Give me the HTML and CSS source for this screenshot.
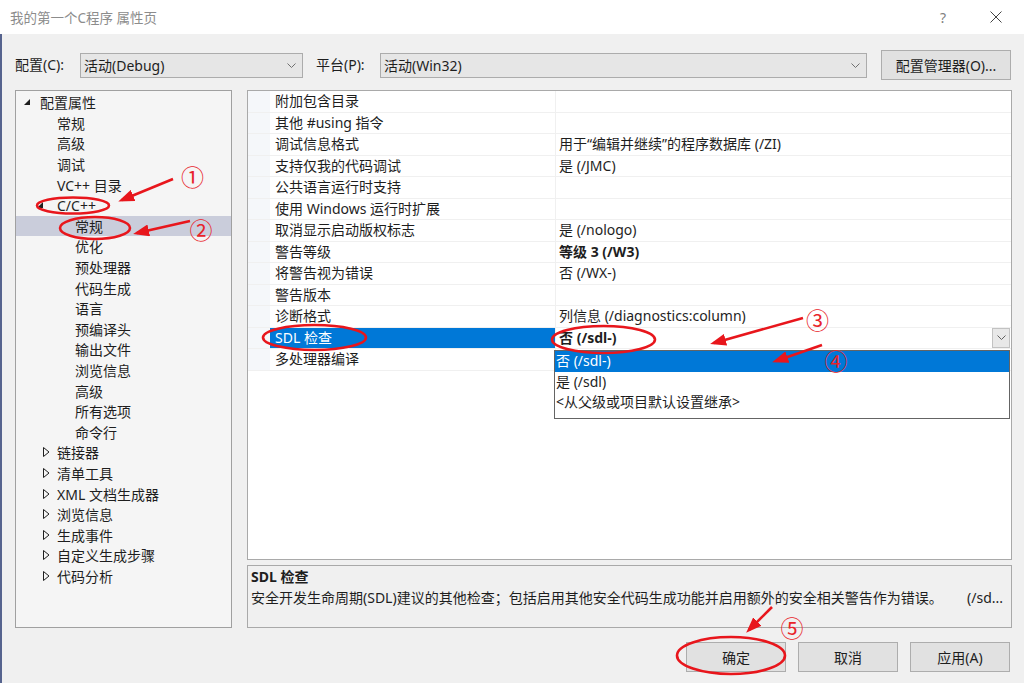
FILE: index.html
```html
<!DOCTYPE html>
<html lang="zh-CN">
<head>
    <meta charset="UTF-8">
    <title>我的第一个C程序 属性页</title>
    <link rel="stylesheet" href="styles.css">
</head>
<body>
    <div class="titlebar">
        <span class="title">我的第一个C程序 属性页</span>
        <span class="help">?</span>
        <span class="close">
            <svg width="12" height="12" viewBox="0 0 12 12"><path d="M0.5 0.5 L11.5 11.5 M11.5 0.5 L0.5 11.5" stroke="#444" stroke-width="1" fill="none"/></svg>
        </span>
    </div>
    <div class="main">
        <div class="toolbar">
            <span class="tb-label">配置(C):</span>
            <div class="combo combo-config">
                <span>活动(Debug)</span>
                <svg class="chev" width="9" height="5" viewBox="0 0 9 5"><polyline points="0.5,0.5 4.5,4.5 8.5,0.5" stroke="#707070" fill="none"/></svg>
            </div>
            <span class="tb-label tb-platform">平台(P):</span>
            <div class="combo combo-platform">
                <span>活动(Win32)</span>
                <svg class="chev" width="9" height="5" viewBox="0 0 9 5"><polyline points="0.5,0.5 4.5,4.5 8.5,0.5" stroke="#707070" fill="none"/></svg>
            </div>
            <button class="btn btn-manager">配置管理器(O)...</button>
        </div>

        <div class="content">
            <div class="tree">
                <div class="node root"><span class="twist"><svg width="6" height="6" viewBox="0 0 6 6"><polygon points="6,0 6,6 0,6" fill="#1e1e1e"/></svg></span>配置属性</div>
                <div class="node l1">常规</div>
                <div class="node l1">高级</div>
                <div class="node l1">调试</div>
                <div class="node l1">VC++ 目录</div>
                <div class="node l1-open"><span class="twist"><svg width="6" height="6" viewBox="0 0 6 6"><polygon points="6,0 6,6 0,6" fill="#1e1e1e"/></svg></span>C/C++</div>
                <div class="node l2 selected">常规</div>
                <div class="node l2">优化</div>
                <div class="node l2">预处理器</div>
                <div class="node l2">代码生成</div>
                <div class="node l2">语言</div>
                <div class="node l2">预编译头</div>
                <div class="node l2">输出文件</div>
                <div class="node l2">浏览信息</div>
                <div class="node l2">高级</div>
                <div class="node l2">所有选项</div>
                <div class="node l2">命令行</div>
                <div class="node l1-closed"><span class="twist"><svg width="7" height="10" viewBox="0 0 7 10"><polygon points="0.5,0.5 6,5 0.5,9.5" fill="none" stroke="#1e1e1e"/></svg></span>链接器</div>
                <div class="node l1-closed"><span class="twist"><svg width="7" height="10" viewBox="0 0 7 10"><polygon points="0.5,0.5 6,5 0.5,9.5" fill="none" stroke="#1e1e1e"/></svg></span>清单工具</div>
                <div class="node l1-closed"><span class="twist"><svg width="7" height="10" viewBox="0 0 7 10"><polygon points="0.5,0.5 6,5 0.5,9.5" fill="none" stroke="#1e1e1e"/></svg></span>XML 文档生成器</div>
                <div class="node l1-closed"><span class="twist"><svg width="7" height="10" viewBox="0 0 7 10"><polygon points="0.5,0.5 6,5 0.5,9.5" fill="none" stroke="#1e1e1e"/></svg></span>浏览信息</div>
                <div class="node l1-closed"><span class="twist"><svg width="7" height="10" viewBox="0 0 7 10"><polygon points="0.5,0.5 6,5 0.5,9.5" fill="none" stroke="#1e1e1e"/></svg></span>生成事件</div>
                <div class="node l1-closed"><span class="twist"><svg width="7" height="10" viewBox="0 0 7 10"><polygon points="0.5,0.5 6,5 0.5,9.5" fill="none" stroke="#1e1e1e"/></svg></span>自定义生成步骤</div>
                <div class="node l1-closed"><span class="twist"><svg width="7" height="10" viewBox="0 0 7 10"><polygon points="0.5,0.5 6,5 0.5,9.5" fill="none" stroke="#1e1e1e"/></svg></span>代码分析</div>
            </div>

            <div class="right">
                <div class="grid">
                    <div class="row"><span class="gutter"></span><span class="name">附加包含目录</span><span class="value"></span></div>
                    <div class="row"><span class="gutter"></span><span class="name">其他 #using 指令</span><span class="value"></span></div>
                    <div class="row"><span class="gutter"></span><span class="name">调试信息格式</span><span class="value">用于“编辑并继续”的程序数据库 (/ZI)</span></div>
                    <div class="row"><span class="gutter"></span><span class="name">支持仅我的代码调试</span><span class="value">是 (/JMC)</span></div>
                    <div class="row"><span class="gutter"></span><span class="name">公共语言运行时支持</span><span class="value"></span></div>
                    <div class="row"><span class="gutter"></span><span class="name">使用 Windows 运行时扩展</span><span class="value"></span></div>
                    <div class="row"><span class="gutter"></span><span class="name">取消显示启动版权标志</span><span class="value">是 (/nologo)</span></div>
                    <div class="row"><span class="gutter"></span><span class="name">警告等级</span><span class="value bold">等级 3 (/W3)</span></div>
                    <div class="row"><span class="gutter"></span><span class="name">将警告视为错误</span><span class="value">否 (/WX-)</span></div>
                    <div class="row"><span class="gutter"></span><span class="name">警告版本</span><span class="value"></span></div>
                    <div class="row"><span class="gutter"></span><span class="name">诊断格式</span><span class="value">列信息 (/diagnostics:column)</span></div>
                    <div class="row active"><span class="gutter"></span><span class="name">SDL 检查</span><span class="value bold"><span class="value-text">否 (/sdl-)</span><span class="drop-btn"><svg width="9" height="5" viewBox="0 0 9 5"><polyline points="0.5,0.5 4.5,4.5 8.5,0.5" stroke="#606060" fill="none"/></svg></span></span></div>
                    <div class="row"><span class="gutter"></span><span class="name">多处理器编译</span><span class="value"></span></div>

                    <div class="droplist">
                        <div class="opt picked">否 (/sdl-)</div>
                        <div class="opt">是 (/sdl)</div>
                        <div class="opt">&lt;从父级或项目默认设置继承&gt;</div>
                    </div>
                </div>
                <div class="desc">
                    <div class="desc-title">SDL 检查</div>
                    <div class="desc-text"><span>安全开发生命周期(SDL)建议的其他检查；包括启用其他安全代码生成功能并启用额外的安全相关警告作为错误。</span><span class="desc-tail">(/sd...</span></div>
                </div>
            </div>
        </div>

        <div class="actions">
            <button class="btn">确定</button>
            <button class="btn">取消</button>
            <button class="btn">应用(A)</button>
        </div>
    </div>

    <!-- red annotation marks drawn over the dialog -->
    <svg class="marks" width="1024" height="683" viewBox="0 0 1024 683">
        <defs>
            <marker id="head" markerUnits="userSpaceOnUse" markerWidth="16" markerHeight="12" refX="12" refY="6" orient="auto">
                <path d="M0,0 L16,6 L0,12 z" fill="#e8161c"/>
            </marker>
        </defs>
        <g fill="none" stroke="#e8161c" stroke-width="2.6">
            <ellipse cx="73" cy="205.5" rx="36" ry="8"/>
            <ellipse cx="95" cy="228" rx="35" ry="11"/>
            <ellipse cx="314.5" cy="337.5" rx="51.5" ry="12.5"/>
            <ellipse cx="603.5" cy="339.5" rx="51.5" ry="13.5"/>
            <ellipse cx="731" cy="655.5" rx="54" ry="18.5"/>
        </g>
        <g stroke="#e8161c" stroke-width="2.6" marker-end="url(#head)">
            <line x1="173" y1="179" x2="122" y2="200"/>
            <line x1="190" y1="221" x2="137" y2="233"/>
            <line x1="803" y1="318" x2="714" y2="343"/>
            <line x1="822" y1="345" x2="776" y2="361"/>
            <line x1="772" y1="607" x2="749" y2="630"/>
        </g>
        <g class="nums" fill="#e8242a" text-anchor="middle" dominant-baseline="central">
            <text x="192.5" y="176">①</text>
            <text x="201" y="229">②</text>
            <text x="817.5" y="319">③</text>
            <text x="836" y="360">④</text>
            <text x="792" y="626.5">⑤</text>
        </g>
    </svg>
</body>
</html>
```

FILE: styles.css
```css
body {
    margin: 0;
    width: 1024px;
    height: 683px;
    overflow: hidden;
    position: relative;
    background: #f0f0f0;
    color: #1e1e1e;
    font-family: "Noto Sans", "Noto Sans CJK SC", sans-serif;
    font-size: 14px;
}

/* title bar */
.titlebar {
    height: 34px;
    background: #ffffff;
    display: flex;
    align-items: center;
    padding-left: 10px;
}
.title {
    flex: 1;
    color: #8c8c8c;
    font-size: 13.5px;
}
.help {
    width: 20px;
    text-align: center;
    color: #808080;
    font-size: 14px;
}
.close {
    width: 20px;
    margin-left: 33px;
    margin-right: 18px;
    display: flex;
    justify-content: center;
}

.main {
    height: 649px;
    background: linear-gradient(to right, #56638e 0, #56638e 2px, #f0f0f0 2px);
}

/* config row */
.toolbar {
    display: flex;
    align-items: center;
    height: 30px;
    padding-top: 16px;
    padding-left: 15px;
}
.tb-label {
    width: 65px;
    line-height: 20px;
}
.tb-platform {
    margin-left: 13px;
    width: 64px;
}
.combo {
    box-sizing: border-box;
    height: 25px;
    background: #e6e6e6;
    border: 1px solid #acacac;
    display: flex;
    align-items: center;
    justify-content: space-between;
    padding: 0 6px 0 3px;
}
.combo-config {
    width: 223px;
}
.combo-platform {
    width: 487px;
}
.btn {
    box-sizing: border-box;
    background: #e1e1e1;
    border: 1px solid #adadad;
    font-family: inherit;
    font-size: 14px;
    color: #1e1e1e;
    padding: 0;
}
.btn-manager {
    margin-left: 14px;
    width: 130px;
    height: 30px;
}

/* tree + grid */
.content {
    display: flex;
    margin-top: 10px;
    height: 538px;
}
.tree {
    box-sizing: border-box;
    width: 217px;
    margin-left: 15px;
    background: #f5f5f5;
    border: 1px solid #a0a0a0;
    padding-top: 1px;
}
.node {
    display: flex;
    align-items: center;
    height: 20.6px;
    white-space: nowrap;
}
.node.root { padding-left: 8px; }
.node.root .twist { width: 16px; }
.node.l1 { padding-left: 41px; }
.node.l1-open { padding-left: 21px; }
.node.l1-open .twist { width: 20px; }
.node.l1-closed { padding-left: 27px; }
.node.l1-closed .twist { width: 14px; }
.node.l2 { padding-left: 59px; }
.twist {
    display: flex;
    align-items: center;
}
.node.selected {
    background: #cacddb;
}

.right {
    width: 765px;
    margin-left: 15px;
    display: flex;
    flex-direction: column;
}
.grid {
    position: relative;
    box-sizing: border-box;
    height: 470px;
    background: #ffffff;
    border: 1px solid #a9a9a9;
}
.row {
    display: flex;
    height: 21.5px;
    box-sizing: border-box;
    border-bottom: 1px solid #f0f0f0;
    white-space: nowrap;
}
.gutter {
    width: 22px;
    background: #f5f7fa;
}
.name {
    width: 285px;
    box-sizing: border-box;
    padding-left: 5px;
    line-height: 20.5px;
}
.value {
    flex: 1;
    box-sizing: border-box;
    padding-left: 3px;
    border-left: 1px solid #f0f0f0;
    line-height: 20.5px;
    display: flex;
    align-items: center;
}
.bold {
    font-weight: bold;
}
.row.active .name {
    background: #0078d7;
    color: #ffffff;
}
.value-text {
    flex: 1;
}
.drop-btn {
    box-sizing: border-box;
    width: 18px;
    height: 20px;
    margin-right: 1px;
    background: #e8e8e8;
    border: 1px solid #c2c2c2;
    display: flex;
    align-items: center;
    justify-content: center;
}

.droplist {
    position: absolute;
    left: 306px;
    top: 259px;
    width: 456px;
    height: 69px;
    box-sizing: border-box;
    background: #ffffff;
    border: 1px solid #646464;
}
.opt {
    height: 20.5px;
    line-height: 20.5px;
    padding-left: 1px;
}
.opt.picked {
    background: #0078d7;
    color: #ffffff;
}

.desc {
    box-sizing: border-box;
    height: 63px;
    margin-top: 5px;
    border: 1px solid #a9a9a9;
    padding: 0 8px 0 3px;
}
.desc-title {
    font-weight: bold;
    line-height: 21px;
}
.desc-text {
    display: flex;
    line-height: 21px;
    white-space: nowrap;
}
.desc-tail {
    margin-left: auto;
}

/* bottom buttons */
.actions {
    display: flex;
    justify-content: flex-end;
    gap: 12px;
    margin-top: 14px;
    padding-right: 14px;
}
.actions .btn {
    width: 100px;
    height: 30px;
}

.marks {
    position: absolute;
    left: 0;
    top: 0;
    pointer-events: none;
}
.nums text {
    font-family: "Noto Sans CJK SC", sans-serif;
    font-size: 23px;
}
```
